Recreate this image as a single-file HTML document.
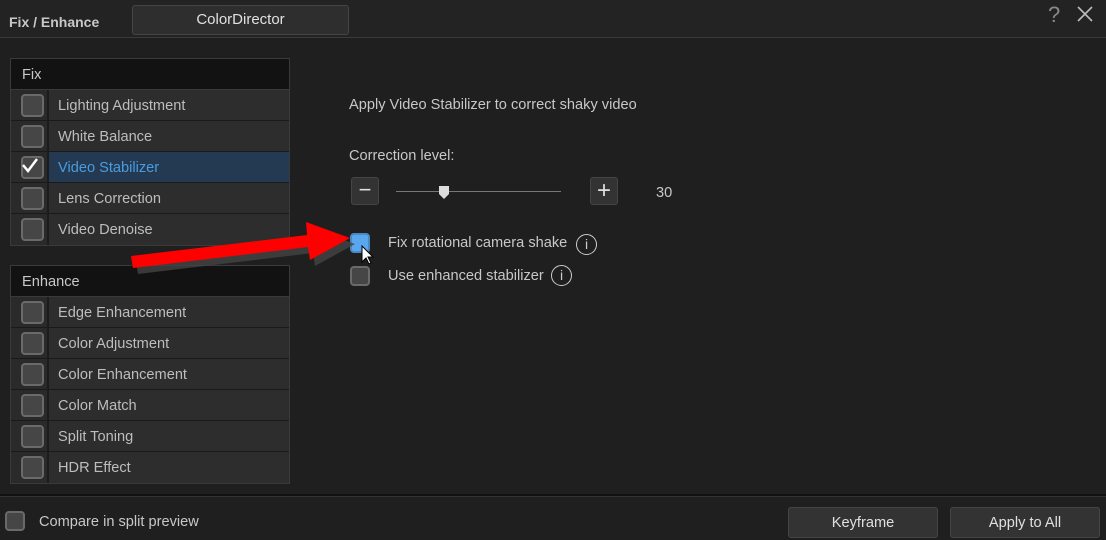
<!DOCTYPE html>
<html><head><style>
*{margin:0;padding:0;box-sizing:border-box}
body{width:1106px;height:540px;background:#1f1f1f;font-family:"Liberation Sans",sans-serif;color:#c8c8c8;position:relative;overflow:hidden;font-size:14.6px}
.abs{position:absolute}
.hdr{left:0;top:0;width:1106px;height:38px;background:#232323;border-bottom:1px solid #3a3a3a}
.panel{left:10px;width:280px;border:1px solid #3a3a3a}
.ph{height:31px;background:#121212;padding-left:11px;line-height:32px;color:#c8c8c8;border-bottom:1px solid #3a3a3a}
.row{height:31px;display:flex;border-bottom:1px solid #1a1a1a;background:#2c2c2c}
.row .cb{width:38px;border-right:2px solid #1c1c1c;position:relative;background:#2a2a2a}
.row .cb:after{content:"";position:absolute;left:10px;top:4px;width:19px;height:19px;border:2px solid #6a6a6a;border-radius:4px;background:#464646}
.row .lb{padding-left:9px;line-height:32px;color:#bdbdbd;flex:1;background:#2d2d2d}
.row.sel .lb{background:#243a52;color:#4a9be0}
.btn{background:#333;border:1px solid #454545;border-radius:3px;color:#e0e0e0;text-align:center}
.chk{width:20px;height:20px;border-radius:4px;border:2px solid #6a6a6a;background:#464646}
.info{width:21px;height:21px;border:1.5px solid #ccc;border-radius:50%;color:#ccc;font-size:14px;text-align:center;line-height:18px}
</style></head><body>
<div class="abs hdr"></div>
<div class="abs" style="left:9px;top:14px;font-weight:bold;color:#c8c8c8;font-size:14px">Fix / Enhance</div>
<div class="abs btn" style="left:132px;top:5px;width:217px;height:30px;line-height:28px;font-size:15px;background:#2e2e2e">ColorDirector</div>
<div class="abs" style="left:1048px;top:2px;font-size:22px;color:#8a8a8a">?</div>
<svg class="abs" style="left:1077px;top:6px" width="16" height="16"><path d="M1 1L15 15M15 1L1 15" stroke="#bbb" stroke-width="1.6"/></svg>

<div class="abs panel" style="top:58px">
<div class="ph">Fix</div>
<div class="row"><div class="cb"></div><div class="lb">Lighting Adjustment</div></div>
<div class="row"><div class="cb"></div><div class="lb">White Balance</div></div>
<div class="row sel"><div class="cb" style="background:#2a2a2a"></div><div class="lb">Video Stabilizer</div></div>
<div class="row"><div class="cb"></div><div class="lb">Lens Correction</div></div>
<div class="row" style="border-bottom:none"><div class="cb"></div><div class="lb">Video Denoise</div></div>
</div>
<svg class="abs" style="left:20px;top:155px" width="20" height="20"><path d="M3 10 L8 16 L17 4" stroke="#fff" stroke-width="2.5" fill="none"/></svg>

<div class="abs panel" style="top:265px">
<div class="ph">Enhance</div>
<div class="row"><div class="cb"></div><div class="lb">Edge Enhancement</div></div>
<div class="row"><div class="cb"></div><div class="lb">Color Adjustment</div></div>
<div class="row"><div class="cb"></div><div class="lb">Color Enhancement</div></div>
<div class="row"><div class="cb"></div><div class="lb">Color Match</div></div>
<div class="row"><div class="cb"></div><div class="lb">Split Toning</div></div>
<div class="row" style="border-bottom:none"><div class="cb"></div><div class="lb">HDR Effect</div></div>
</div>

<div class="abs" style="left:349px;top:97px;color:#c8c8c8">Apply Video Stabilizer to correct shaky video</div>
<div class="abs" style="left:349px;top:148px;color:#c8c8c8">Correction level:</div>
<div class="abs btn" style="left:351px;top:177px;width:28px;height:28px;font-size:22px;line-height:24px">−</div>
<div class="abs" style="left:396px;top:191px;width:165px;height:1px;background:#777"></div>
<svg class="abs" style="left:438px;top:185px" width="12" height="15"><path d="M1 1H11V9L6 14L1 9Z" fill="#ddd"/></svg>
<div class="abs btn" style="left:590px;top:177px;width:28px;height:28px;font-size:24px;line-height:25px">+</div>
<div class="abs" style="left:656px;top:185px;color:#c8c8c8">30</div>

<div class="abs chk" style="left:350px;top:233px;background:#5aa7ef;border-color:#4a88c0"></div>
<div class="abs" style="left:388px;top:235px">Fix rotational camera shake</div>
<div class="abs info" style="left:576px;top:234px">i</div>
<div class="abs chk" style="left:350px;top:266px"></div>
<div class="abs" style="left:388px;top:268px">Use enhanced stabilizer</div>
<div class="abs info" style="left:551px;top:265px">i</div>

<svg class="abs" style="left:120px;top:220px" width="260" height="70">
<path d="M15 50 L190 29 L192 42 L232 20 L188 4 L189 17 L13 38Z" fill="#444" transform="translate(3,4)" opacity=".8"/>
<path d="M13 48 L188 27 L190 40 L230 18 L186 2 L187 15 L11 36Z" fill="#f00"/>
<path d="M242 26 L242 42 L246 38 L249 44 L251 43 L248 37 L253 37Z" fill="#fff" stroke="#000" stroke-width="1"/>
</svg>

<div class="abs" style="left:0;top:494px;width:1106px;height:2px;background:#111"></div>
<div class="abs" style="left:0;top:496px;width:1106px;height:1px;background:#333"></div>
<div class="abs chk" style="left:5px;top:511px"></div>
<div class="abs" style="left:39px;top:514px">Compare in split preview</div>
<div class="abs btn" style="left:788px;top:507px;width:150px;height:31px;line-height:30px">Keyframe</div>
<div class="abs btn" style="left:950px;top:507px;width:150px;height:31px;line-height:30px">Apply to All</div>
</body></html>
